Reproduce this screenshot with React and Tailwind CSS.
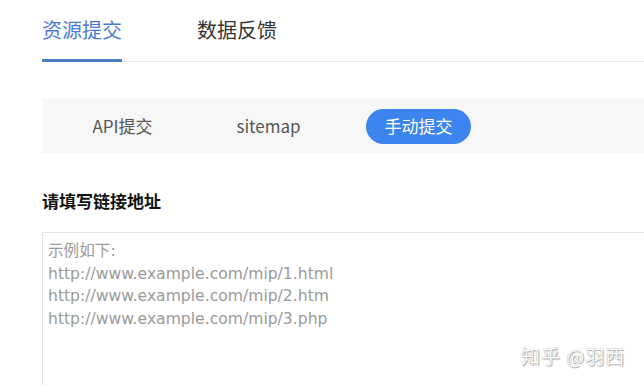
const tabs = ["资源提交", "数据反馈"];

const SubmitTypes = () => {
  return (
    <div className="mt-[37px] flex h-[54px] w-[700px] items-center bg-[#f7f7f7] pl-[28px] text-[17px] text-[#555]">
      <span className="w-[105px] text-center">API提交</span>
      <span className="ml-[41px] w-[105px] text-center">sitemap</span>
      <span className="ml-[45px] flex h-[35px] w-[105px] items-center justify-center rounded-full bg-[#3d84ef] text-white">
        手动提交
      </span>
    </div>
  );
};

const App = () => {
  return (
    <div className="relative h-[385px] w-[644px] overflow-hidden bg-white font-['Microsoft_YaHei','Noto_Sans_CJK_SC',sans-serif]">
      <div className="pl-[42px]">
        <div className="flex w-[700px] border-b border-[#ebebeb]">
          {tabs.map((t, i) => (
            <div
              key={t}
              className={
                i === 0
                  ? "-mb-px border-b-[3px] border-[#4a7cca] pt-[16px] pb-[14px] text-[20px] leading-[28px] text-[#4a7bd0]"
                  : "ml-[75px] pt-[16px] pb-[17px] text-[20px] leading-[28px] text-[#333]"
              }
            >
              {t}
            </div>
          ))}
        </div>

        <SubmitTypes />

        <h3 className="mt-[36px] text-[17px] font-bold leading-[24px] text-[#111]">请填写链接地址</h3>

        <div className="mt-[19px] h-[200px] w-[700px] border border-[#e3e3e3] pt-[7px] pl-[5px] font-['DejaVu_Sans','Noto_Sans_CJK_SC',sans-serif] text-[15.6px] leading-[22.5px] whitespace-pre-line text-[#9a9a9a]">
          {"示例如下:\nhttp://www.example.com/mip/1.html\nhttp://www.example.com/mip/2.htm\nhttp://www.example.com/mip/3.php"}
        </div>
      </div>

      <div className="absolute top-[342px] left-[521px] text-[19px] tracking-[1px] text-white [text-shadow:0_0_1px_#888,1px_1px_1px_#aaa]">
        知乎 @羽西
      </div>
    </div>
  );
};

export default App;
